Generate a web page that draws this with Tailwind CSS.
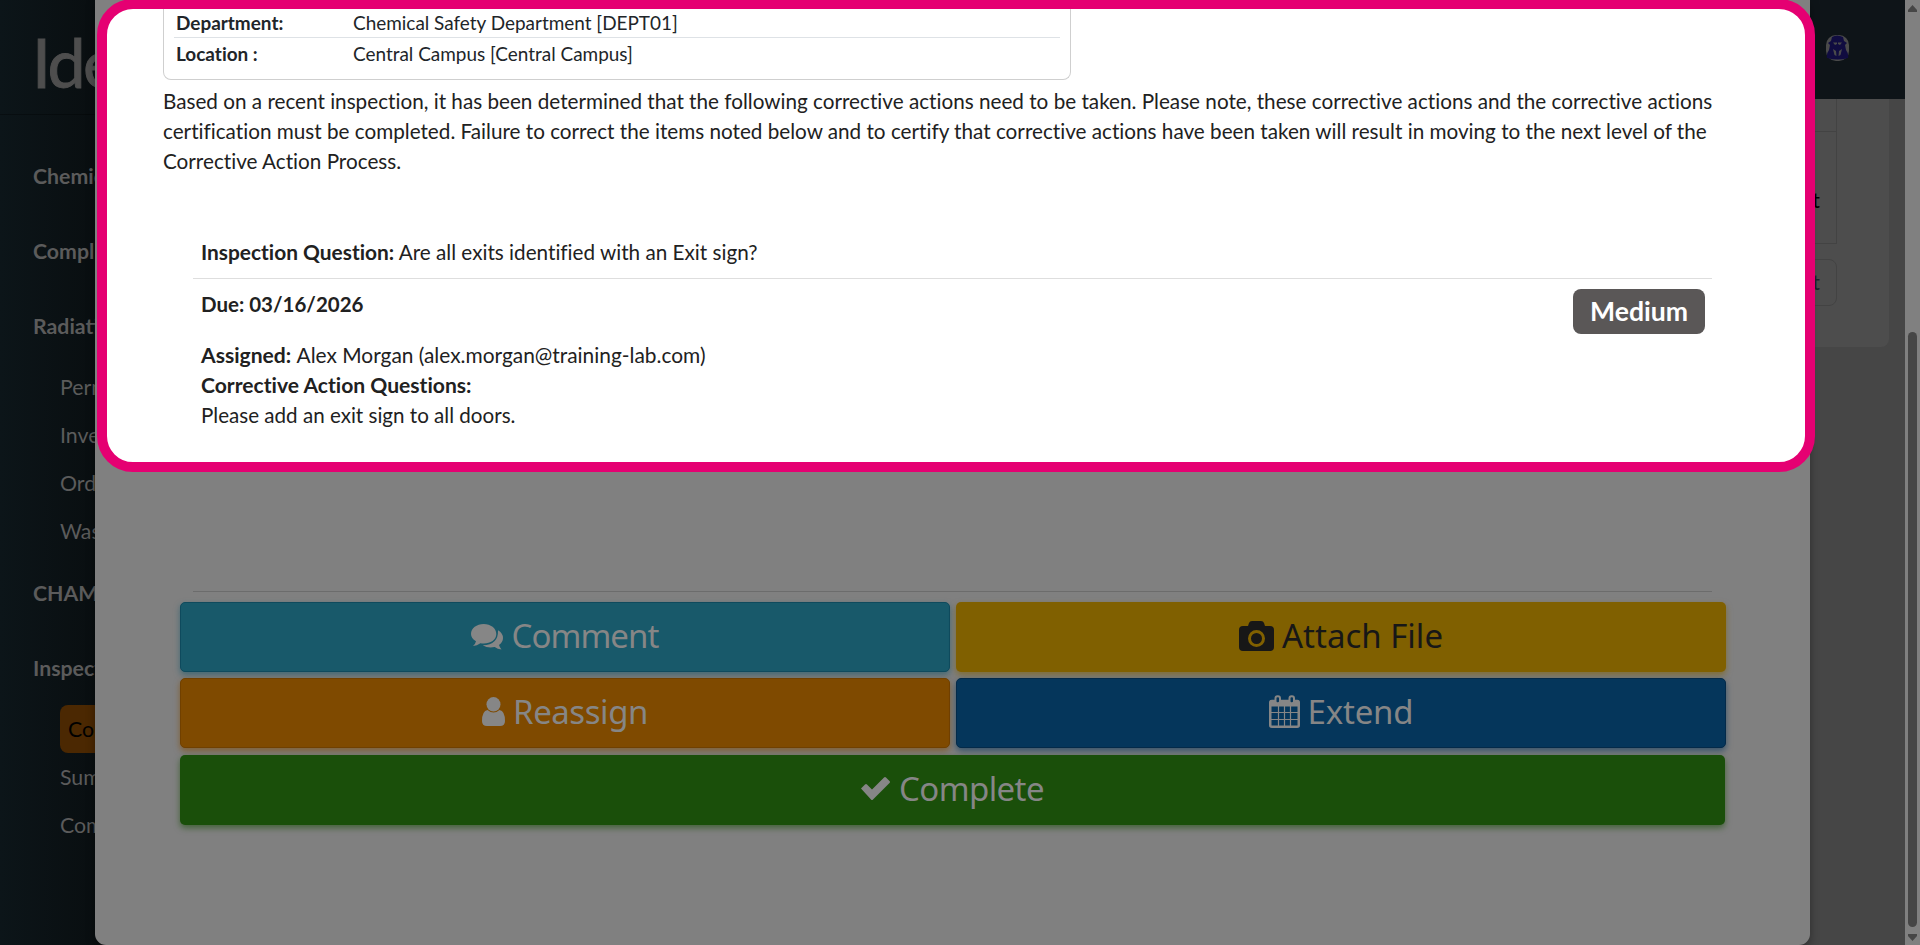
<!DOCTYPE html>
<html lang="en">
<head>
<meta charset="utf-8">
<title>Corrective Action</title>
<script src="https://cdn.jsdelivr.net/npm/@tailwindcss/browser@4"></script>
</head>
<body class="relative flex h-[945px] w-[1920px] overflow-hidden bg-[#464646] font-['Lato',sans-serif] text-[21.3px]">
  <!-- sidebar -->
  <aside class="h-full w-[300px] shrink-0 overflow-hidden bg-linear-to-r from-[#0c1519] to-[#090e10] to-[100px] text-[#5b5b5b]">
    <div class="h-[115px] border-b border-black/30 pt-[22px] pl-[32px] text-[68px] leading-[80px] tracking-[-2.5px] text-[#4e4e4e] [-webkit-text-stroke:1px_#4e4e4e]">Ide</div>
    <nav class="flex flex-col whitespace-nowrap pl-[33px] leading-[30px]">
      <div class="mt-[46px] font-bold">Chemic</div>
      <div class="mt-[45px] font-bold">Compli</div>
      <div class="mt-[45px] font-bold">Radiati</div>
      <div class="mt-[31px] ml-[27px]">Perm</div>
      <div class="mt-[18px] ml-[27px]">Inve</div>
      <div class="mt-[18px] ml-[27px]">Orde</div>
      <div class="mt-[18px] ml-[27px]">Wast</div>
      <div class="mt-[32px] font-bold">CHAM</div>
      <div class="mt-[45px] font-bold">Inspect</div>
      <div class="mt-[22px] ml-[27px] h-12 w-[200px] rounded-lg bg-[#4b2802] pl-2 leading-[48px] text-black">Cor</div>
      <div class="mt-[9px] ml-[27px]">Sum</div>
      <div class="mt-[18px] ml-[27px]">Com</div>
    </nav>
  </aside>

  <!-- page behind the dialog -->
  <main class="flex h-full min-w-0 flex-1 flex-col">
    <header class="flex h-[99px] shrink-0 items-start justify-end bg-[#0e1418] pr-[56px] pt-[35px]">
      <svg class="h-[26px] w-[23px]" viewBox="0 0 23 26"><rect width="23" height="26" rx="10" fill="#4a4a4a"/><path d="M6 2q5-3 11 0l1 4 3 2-2 2 1 5q3 4 2 8-10 3-21 0-1-4 2-8l1-5-2-2 3-2z" fill="#100c40"/><path d="M7 7.500h4v1.500L9 10zM12 7.500h4L14 10l-2-1zM7 14l3 2 .5 5-2-1zM16 14l-3 2-.5 5 2-1z" fill="#4a4a4a"/></svg>
    </header>
    <div class="mr-4 flex h-[248px] flex-col rounded-br-lg bg-[#4d4d4d] pr-[52px]">
      <div class="h-[33px] border-r border-b border-[#434343]"></div>
      <div class="flex h-[112px] items-center justify-end border-r border-b border-[#434343] pt-[26px] pr-4 text-black">t</div>
      <div class="mt-[15px] flex h-[47px] items-center justify-end rounded-lg border border-[#434343] pr-4 text-[#1b232b]">t</div>
    </div>
  </main>

  <!-- scrollbar -->
  <div class="flex h-full w-[15px] shrink-0 flex-col items-center bg-[#808080]">
    <svg class="mt-[5px] h-[7px] w-[9px]" viewBox="0 0 9 7"><path d="M4.5 0 9 5v2H0V5z" fill="#464646"/></svg>
    <div class="mt-[320px] h-[595px] w-[9px] rounded-full bg-[#464646]"></div>
    <svg class="mt-[7px] h-[7px] w-[9px]" viewBox="0 0 9 7"><path d="M4.5 7 9 2V0H0v2z" fill="#464646"/></svg>
  </div>

  <!-- dialog -->
  <section class="absolute top-0 left-[95px] h-[945px] w-[1715px] rounded-b-[11px] bg-[#808080] shadow-[0_4px_10px_rgba(0,0,0,0.35)]">
    <div class="flex h-full flex-col">
      <div class="h-[591px] shrink-0"></div>
      <hr class="mx-[98px] border-[#6c6c6c]">
      <div class="ml-[85px] grid w-[1546px] grid-cols-2 gap-x-[6px] pt-[10px] font-['Noto_Sans',sans-serif] text-[33px] text-[#868686]">
        <div class="mb-[6px] flex h-[70px] items-center justify-center gap-2 rounded-[5px] border border-[#0f4a5d] bg-[#18596a] pb-[3px] shadow-[0_3px_6px_rgba(24,89,106,0.6)]">
          <svg class="mt-[3px] h-[26px] w-8" viewBox="0 0 32 26"><path d="M12.700 0C19.700 0 25.300 4.300 25.300 10S19.700 19.500 12.700 19.500q-1.700 0-3.300-.3Q6 21.600 2 22q2.300-1.700 3-4.700Q0 14.300 0 10C0 4.300 5.700 0 12.700 0z" fill="currentColor"/><path d="M27 6.300q5 3 5 7.700 0 4-4 7 .7 2.500 2.500 4.500-4-.5-6.800-2.500-7 1.400-12-1.800Q27.500 21 27 6.300z" fill="currentColor"/></svg>
          <span class="tracking-[-0.9px]">Comment</span>
        </div>
        <div class="mb-[6px] flex h-[70px] items-center justify-center gap-2 rounded-[5px] bg-[#806000] pb-[3px] text-[#171717] shadow-[0_3px_6px_rgba(128,96,0,0.6)]">
          <svg class="h-[30px] w-[35px]" viewBox="0 0 35 30"><path fill-rule="evenodd" d="M4 5h5l1-3q.7-2 3-2h9q2.300 0 3 2l1 3h5q4 0 4 4v17q0 4-4 4H4q-4 0-4-4V9q0-4 4-4zM17.500 9a8.500 8.500 0 1 0 0 17 8.500 8.500 0 0 0 0-17zm0 3a5.500 5.500 0 1 1 0 11 5.500 5.500 0 0 1 0-11z" fill="currentColor"/></svg>
          <span>Attach File</span>
        </div>
        <div class="flex h-[70px] items-center justify-center gap-2 rounded-[5px] border border-[#704000] bg-[#7f4a00] pb-[3px] shadow-[0_3px_6px_rgba(127,74,0,0.6)]">
          <svg class="h-[29px] w-[23px]" viewBox="0 0 23 29"><ellipse cx="11.500" cy="7.300" rx="7" ry="7.300" fill="currentColor"/><path d="M5.500 13q6 5 12 0Q23 14 23 24q0 5-5 5H5q-5 0-5-5Q0 14 5.500 13z" fill="currentColor"/></svg>
          <span class="tracking-[-0.45px]">Reassign</span>
        </div>
        <div class="flex h-[70px] items-center justify-center gap-2 rounded-[5px] border border-[#042a49] bg-[#05365b] pb-[3px] shadow-[0_3px_6px_rgba(5,54,91,0.6)]">
          <svg class="h-[33px] w-[31px]" viewBox="0 0 31 33" fill="none" stroke="currentColor"><rect x="1.250" y="6" width="28.500" height="25.700" rx="1.500" stroke-width="2.500"/><path d="M1 8.500h29" stroke-width="6"/><path d="M2 17.500h27M2 24.500h27M9.500 11v20M15.500 11v20M21.500 11v20" stroke-width="1.200"/><rect x="6.500" y="1.200" width="4.500" height="7" rx="2" fill="#05365b" stroke-width="2"/><rect x="20.500" y="1.200" width="4.500" height="7" rx="2" fill="#05365b" stroke-width="2"/></svg>
          <span class="tracking-[-0.2px]">Extend</span>
        </div>
      </div>
      <div class="mt-[7px] ml-[85px] flex h-[70px] w-[1545px] shrink-0 items-center justify-center gap-[9px] rounded-[5px] bg-[#1a4f0a] pb-[3px] font-['Noto_Sans',sans-serif] text-[33px] text-[#868686] shadow-[0_3px_6px_rgba(26,79,10,0.6)]">
        <svg class="h-[23px] w-[29px]" viewBox="0 0 29 23"><path d="M0 11.500 4 7.500q1-1 2 0l5 5L23 .6q1-1 2 0l3.500 3.500q1 1 0 2L12 22.400q-1 1-2 0z" fill="currentColor"/></svg>
        <span class="tracking-[-0.6px]">Complete</span>
      </div>
    </div>
  </section>

  <!-- highlighted area -->
  <section class="absolute -top-px left-[97px] h-[473px] w-[1718px] overflow-hidden rounded-[36px] border-10 border-[#e50072] bg-white text-[20.7px] text-[#212121] [font-variant-ligatures:none]">
    <div class="ml-[56px] h-[71px] w-[908px] rounded-b-lg border border-t-0 border-[#cfcfcf] px-[10px] text-[18.95px] leading-[28px] text-[#212529]">
      <div class="flex h-[29px] border-b border-[#dee2e6] px-[2px]"><b class="w-[177px]">Department:</b><span>Chemical Safety Department [DEPT01]</span></div>
      <div class="flex px-[2px] pt-[2px]"><b class="w-[177px]">Location :</b><span>Central Campus [Central Campus]</span></div>
    </div>
    <p class="ml-[56px] pt-[6px] leading-[30px] whitespace-nowrap">Based on a recent inspection, it has been determined that the following corrective actions need to be taken. Please note, these corrective actions and the corrective actions<br>certification must be completed. Failure to correct the items noted below and to certify that corrective actions have been taken will result in moving to the next level of the<br>Corrective Action Process.</p>
    <div class="ml-[86px] w-[1519px] pt-[61px] leading-[30px]">
      <div class="h-[42px] border-b border-[#dedede] pl-2"><b class="text-[20.9px]">Inspection Question:</b> Are all exits identified with an Exit sign?</div>
      <div class="flex justify-between pt-[10px] pr-[7px] pl-2">
        <b class="text-[20.5px]">Due: 03/16/2026</b>
        <span class="flex h-[45px] w-[132px] items-center justify-center rounded-lg bg-[#5a5757] pb-px text-[26.600px] font-bold text-white">Medium</span>
      </div>
      <div class="pt-[6px] pl-2"><b class="text-[21.1px]">Assigned:</b> <span class="text-[20.9px]">Alex Morgan (alex.morgan@training-lab.com)</span><br><b class="text-[21.1px]">Corrective Action Questions:</b><br><span class="text-[20.6px]">Please add an exit sign to all doors.</span></div>
    </div>
  </section>
</body>
</html>
